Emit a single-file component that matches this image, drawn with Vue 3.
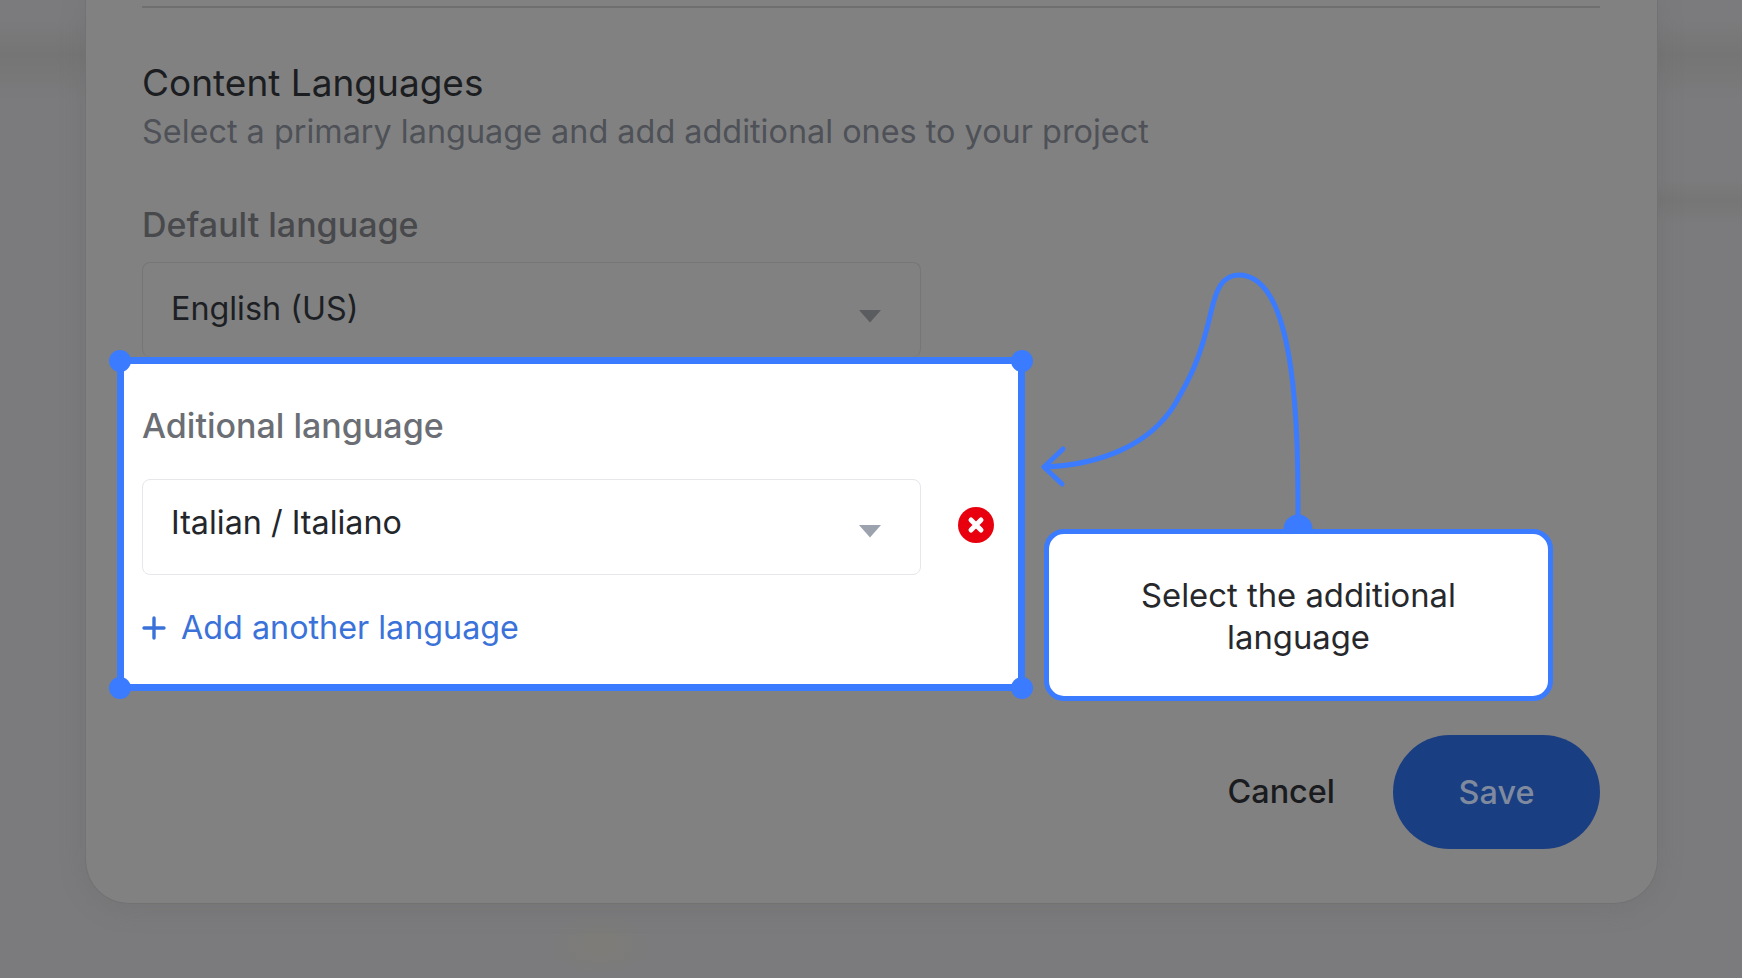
<script setup>
const title = 'Content Languages'
const subtitle = 'Select a primary language and add additional ones to your project'
</script>

<template>
  <div class="page">
    <main class="card">
      <div class="divider"></div>
      <h2 class="title">{{ title }}</h2>
      <p class="subtitle">{{ subtitle }}</p>
      <div class="label default-label">Default language</div>
      <div class="select select-dim">
        <span>English (US)</span>
        <svg class="caret" viewBox="0 0 24 14"><path d="M1 1h22L12 13.5z" fill="#5b5c5f" /></svg>
      </div>

      <section class="additional">
        <i class="handle tl"></i><i class="handle tr"></i><i class="handle bl"></i><i class="handle br"></i>
        <div class="label add-label">Aditional language</div>
        <div class="add-row">
          <div class="select select-live">
            <span>Italian / Italiano</span>
            <svg class="caret" viewBox="0 0 24 14"><path d="M1 1h22L12 13.5z" fill="#9ca3af" /></svg>
          </div>
          <svg class="remove" viewBox="0 0 36 36">
            <circle cx="18" cy="18" r="18" fill="#e8000f" />
            <path d="M13 13l10 10M23 13l-10 10" stroke="#fff" stroke-width="5" stroke-linecap="round" />
          </svg>
        </div>
        <div class="add-link">
          <svg class="plus" viewBox="0 0 24 24"><path d="M12 2v20M2 12h20" stroke="#3b72d9" stroke-width="3.4" stroke-linecap="round" /></svg>
          <span>Add another language</span>
        </div>
      </section>

      <div class="actions">
        <span class="cancel">Cancel</span>
        <span class="save">Save</span>
      </div>
    </main>

    <svg class="arrow" viewBox="0 0 1742 978">
      <circle cx="1298" cy="529" r="14.5" fill="#3b7bff" />
      <path d="M1298 515C1298 440 1298 275 1239 275C1222 275 1216 290 1211 312C1200 360 1190 378 1175 404C1150 445 1100 465 1044 467" fill="none" stroke="#3b7bff" stroke-width="5" stroke-linecap="round" />
      <path d="M1063 449L1044 467L1062 484" fill="none" stroke="#3b7bff" stroke-width="5" stroke-linecap="round" stroke-linejoin="round" />
    </svg>
    <aside class="callout">Select the additional language</aside>
  </div>
</template>

<style scoped>
.page {
  position: relative;
  width: 1742px;
  height: 978px;
  overflow: hidden;
  font-family: Inter, "Liberation Sans", sans-serif;
  background:
    radial-gradient(ellipse 50px 30px at 600px 945px, #7d7c77, rgba(125, 124, 119, 0)),
    linear-gradient(180deg, #7b7b7d 20px, #757575 55px, #7b7b7d 100px) left top / 86px 978px no-repeat,
    linear-gradient(180deg, #7b7b7d 20px, #757575 55px, #7b7b7d 100px, #7b7b7d 180px, #767676 200px, #7b7b7d 225px) right top / 90px 978px no-repeat,
    #7b7b7d;
}
.card {
  box-sizing: border-box;
  width: 1573px;
  height: 904px;
  margin-left: 85px;
  padding: 6px 57px 0 56px;
  background: #818181;
  border: 1px solid #727274;
  border-top: 0;
  border-radius: 0 0 44px 44px;
  box-shadow: 0 4px 24px rgba(100, 100, 104, 0.25);
}
.divider {
  height: 2px;
  background: #6f6f70;
}
.title {
  margin: 53px 0 0;
  font-size: 37px;
  line-height: 44px;
  font-weight: 400;
  color: #1b1d21;
}
.subtitle {
  margin: 7px 0 0;
  font-size: 32.4px;
  line-height: 40px;
  font-weight: 400;
  color: #4e5157;
}
.label {
  font-size: 34px;
  line-height: 40px;
  font-weight: 500;
}
.default-label {
  margin-top: 53px;
  color: #48494c;
}
.select {
  box-sizing: border-box;
  display: flex;
  align-items: flex-start;
  justify-content: space-between;
  width: 779px;
  height: 95px;
  padding: 26px 38px 0 28px;
  border-radius: 8px;
  font-size: 32.3px;
  line-height: 40px;
  color: #1c1f24;
}
.select-dim {
  margin-top: 17px;
  border: 1px solid #767676;
  border-bottom: 0;
}
.select-live {
  height: 96px;
  padding-top: 23px;
  border: 1px solid #e5e7eb;
  color: #23262b;
}
.select-dim .caret {
  margin-top: 20px;
}
.caret {
  width: 24px;
  height: 14px;
  margin-top: 21px;
}
.additional {
  position: relative;
  box-sizing: border-box;
  width: 908px;
  height: 334px;
  margin: 0 0 0 -25px;
  padding: 42px 19px 0 18px;
  background: #fff;
  border: 7px solid #3b7bff;
}
.handle {
  position: absolute;
  width: 22px;
  height: 22px;
  border-radius: 50%;
  background: #3b7bff;
}
.tl { left: -15px; top: -14px; }
.tr { right: -15px; top: -14px; }
.bl { left: -15px; bottom: -15px; }
.br { right: -15px; bottom: -15px; }
.add-label {
  color: #6b6e74;
}
.add-row {
  display: flex;
  align-items: center;
  gap: 37px;
  margin-top: 33px;
}
.remove {
  width: 36px;
  height: 36px;
  margin-top: -4px;
}
.add-link {
  display: flex;
  align-items: center;
  gap: 15px;
  margin-top: 33px;
  font-size: 32.3px;
  line-height: 40px;
  color: #3b72d9;
}
.plus {
  width: 24px;
  height: 24px;
}
.actions {
  display: flex;
  align-items: center;
  justify-content: flex-end;
  gap: 58px;
  margin-top: 44px;
}
.cancel {
  font-size: 32.4px;
  line-height: 40px;
  font-weight: 500;
  color: #1a1b1e;
}
.save {
  display: flex;
  align-items: center;
  justify-content: center;
  width: 207px;
  height: 114px;
  border-radius: 57px;
  background: #1a3e82;
  font-size: 32.4px;
  font-weight: 500;
  color: #7f8a9e;
}
.arrow {
  position: absolute;
  left: 0;
  top: 0;
  width: 1742px;
  height: 978px;
}
.callout {
  position: absolute;
  left: 1044px;
  top: 529px;
  box-sizing: border-box;
  display: flex;
  align-items: center;
  justify-content: center;
  width: 509px;
  height: 172px;
  padding: 2px 60px 0;
  background: #fff;
  border: 5px solid #3b7bff;
  border-radius: 20px;
  text-align: center;
  font-size: 32.8px;
  line-height: 42px;
  color: #26282c;
}
</style>
